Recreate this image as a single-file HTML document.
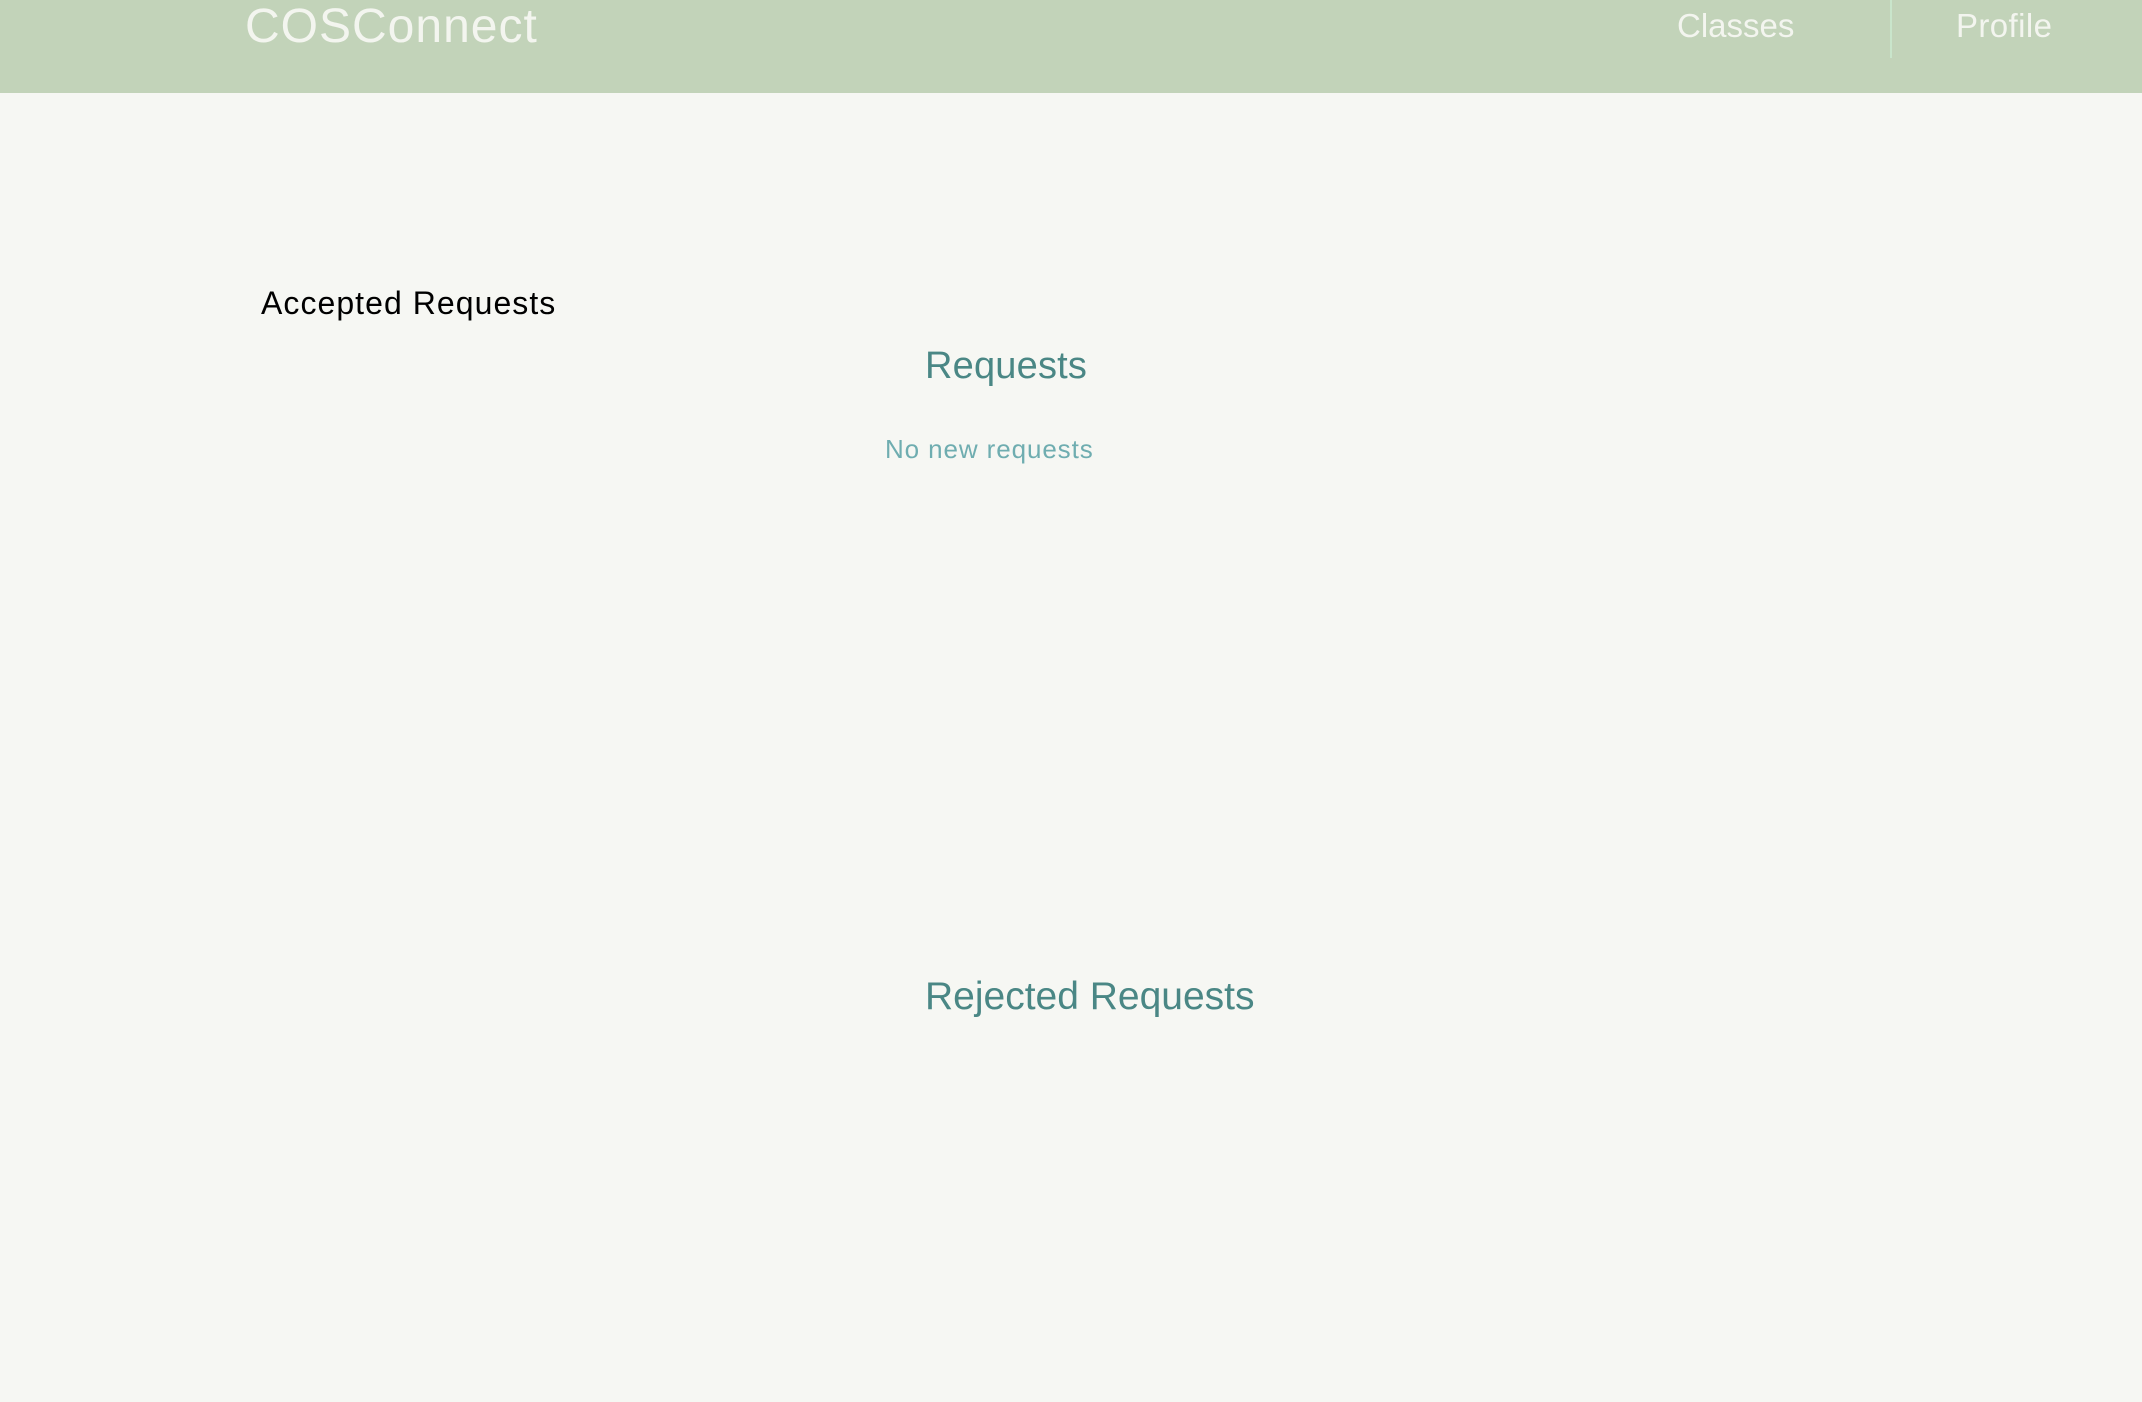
<!DOCTYPE html>
<html><head><meta charset="utf-8"><style>
html,body{margin:0;padding:0;width:2142px;height:1402px;overflow:hidden;background:#f6f7f3;font-family:"Liberation Sans",sans-serif}
.a{position:absolute;line-height:1;white-space:nowrap}
.hdr{position:absolute;left:0;top:0;width:2142px;height:93px;background:#c2d3b9}
</style></head><body>
<div class="hdr"></div>
<div class="a" style="left:245px;top:3px;font-size:48px;color:#f3f5ef;letter-spacing:1px">COSConnect</div>
<div class="a" style="left:1677px;top:9px;font-size:33px;color:#f3f5ef">Classes</div>
<div style="position:absolute;left:1890px;top:0;width:2px;height:58px;background:#c9e5cb"></div>
<div class="a" style="left:1956px;top:9px;font-size:33px;color:#f3f5ef;letter-spacing:0.4px">Profile</div>
<div class="a" style="left:261px;top:287px;font-size:32px;color:#000;letter-spacing:1.05px">Accepted Requests</div>
<div class="a" style="left:925px;top:347px;font-size:38px;color:#4a8785;letter-spacing:0.2px">Requests</div>
<div class="a" style="left:885px;top:436px;font-size:26px;color:#6fadb0;letter-spacing:0.9px">No new requests</div>
<div class="a" style="left:925px;top:977px;font-size:39px;color:#4a8785">Rejected Requests</div>
</body></html>
